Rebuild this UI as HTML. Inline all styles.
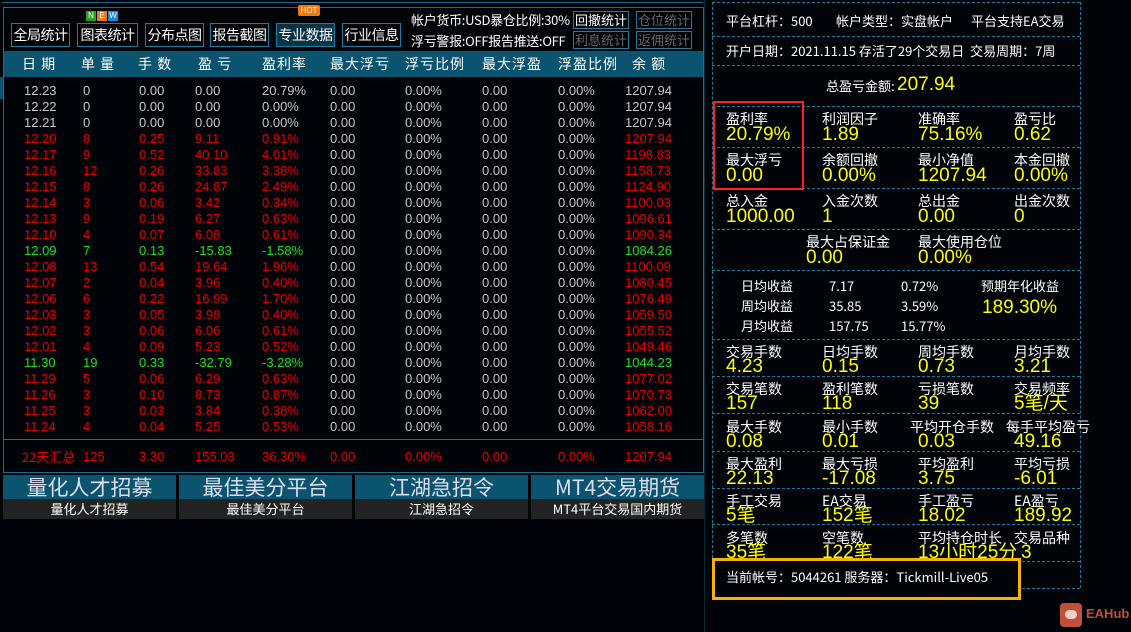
<!DOCTYPE html>
<html><head><meta charset="utf-8">
<style>
*{margin:0;padding:0;box-sizing:border-box}
body{width:1131px;height:632px;background:#000308;position:relative;overflow:hidden;font-family:"Liberation Sans","Noto Sans CJK SC",sans-serif;color:#fff}
.a{position:absolute;white-space:nowrap}
.btn{position:absolute;top:23px;height:24px;border:1px solid #1a7fa0;background:#000;color:#fff;font-size:14px;line-height:22px;text-align:center;font-family:"Noto Sans CJK SC",sans-serif;white-space:nowrap;overflow:hidden;letter-spacing:-0.5px}
.sb{position:absolute;height:18px;width:56px;border:1px solid #2a7a95;font-size:13px;line-height:16px;text-align:center;font-family:"Noto Sans CJK SC",sans-serif;white-space:nowrap;overflow:hidden;background:#000308}
.hd span{position:absolute;top:56px;font-size:14px;color:#fff;font-family:"Noto Sans CJK SC",sans-serif;letter-spacing:1px;line-height:16px}
.r{position:absolute;left:0;height:16px;font-size:13px;line-height:16px;width:700px}
.r span{position:absolute}
.r span:nth-child(1){left:24px}.r span:nth-child(2){left:83px}.r span:nth-child(3){left:139px}.r span:nth-child(4){left:195px}.r span:nth-child(5){left:262px}
.r span:nth-child(6){left:330px;color:#c8c8c8}.r span:nth-child(7){left:405px;color:#c8c8c8}.r span:nth-child(8){left:482px;color:#c8c8c8}.r span:nth-child(9){left:558px;color:#c8c8c8}.r span:nth-child(10){left:625px}
.g{color:#c8c8c8}.red{color:#e80000}.gr{color:#22e022}
.bb{position:absolute;top:475px;height:44px;width:173px}
.bb .t{height:24px;background:#0b5470;color:#dde;font-size:21px;line-height:24px;text-align:center;font-family:"Noto Sans CJK SC",sans-serif}
.bb .s{height:20px;background:#232323;color:#fff;font-size:13px;line-height:20px;text-align:center;font-family:"Noto Sans CJK SC",sans-serif}
.dl{position:absolute;left:712px;width:368px;border-top:1px dashed #1d7b9c;height:0}
.L{position:absolute;font-size:14px;color:#fff;font-family:"Noto Sans CJK SC",sans-serif;line-height:16px;white-space:nowrap}
.V{position:absolute;font-size:19px;color:#ffff00;line-height:20px;white-space:nowrap}
.w{position:absolute;font-size:13px;color:#fff;font-family:"Noto Sans CJK SC",sans-serif;white-space:nowrap;line-height:16px}
</style></head><body>
<div class="a" style="left:2px;top:0;width:701px;height:3px;border-bottom:1px solid #1a6f8f"></div>
<div class="a" style="left:3px;top:7px;width:701px;height:466px;border:1px solid #1a6f8f"></div>
<div class="a" style="left:0;top:77px;width:3px;height:22px;background:#0b5470"></div>
<div class="a" style="left:4px;top:51px;width:699px;height:26px;background:#0b5470"></div>

<div class="btn" style="left:11px;width:59px">全局统计</div>
<div class="btn" style="left:77px;width:61px">图表统计</div>
<div class="btn" style="left:145px;width:59px">分布点图</div>
<div class="btn" style="left:210px;width:59px">报告截图</div>
<div class="btn" style="left:276px;width:59px;background:#0a3346">专业数据</div>
<div class="btn" style="left:342px;width:59px">行业信息</div>
<div class="a" style="left:86px;top:11px;width:10px;height:10px;background:#2aa02a;font-size:8px;line-height:10px;text-align:center;color:#fff">N</div>
<div class="a" style="left:97px;top:11px;width:10px;height:10px;background:#f07a10;font-size:8px;line-height:10px;text-align:center;color:#fff">E</div>
<div class="a" style="left:108px;top:11px;width:10px;height:10px;background:#1a8ae0;font-size:8px;line-height:10px;text-align:center;color:#fff">W</div>
<div class="a" style="left:298px;top:5px;width:22px;height:11px;background:#f07a10;font-size:8px;line-height:11px;text-align:center;color:#fff;border-radius:2px">HOT</div>
<div class="w" style="left:411px;top:12px;font-size:13px;letter-spacing:-0.3px">帐户货币:USD暴仓比例:30%</div>
<div class="w" style="left:411px;top:33px;font-size:13px;letter-spacing:-0.3px">浮亏警报:OFF报告推送:OFF</div>
<div class="sb" style="left:573px;top:11px;color:#fff">回撤统计</div>
<div class="sb" style="left:636px;top:11px;color:#666">仓位统计</div>
<div class="sb" style="left:573px;top:31px;color:#666">利息统计</div>
<div class="sb" style="left:636px;top:31px;color:#666">返佣统计</div>

<div class="hd"><span style="left:22px">日 期</span><span style="left:81px">单 量</span><span style="left:138px">手 数</span><span style="left:198px">盈 亏</span><span style="left:262px">盈利率</span><span style="left:330px">最大浮亏</span><span style="left:405px">浮亏比例</span><span style="left:482px">最大浮盈</span><span style="left:558px">浮盈比例</span><span style="left:632px">余 额</span></div>

<div class="r g" style="top:83px"><span>12.23</span><span>0</span><span>0.00</span><span>0.00</span><span>20.79%</span><span>0.00</span><span>0.00%</span><span>0.00</span><span>0.00%</span><span>1207.94</span></div>
<div class="r g" style="top:99px"><span>12.22</span><span>0</span><span>0.00</span><span>0.00</span><span>0.00%</span><span>0.00</span><span>0.00%</span><span>0.00</span><span>0.00%</span><span>1207.94</span></div>
<div class="r g" style="top:115px"><span>12.21</span><span>0</span><span>0.00</span><span>0.00</span><span>0.00%</span><span>0.00</span><span>0.00%</span><span>0.00</span><span>0.00%</span><span>1207.94</span></div>
<div class="r red" style="top:131px"><span>12.20</span><span>8</span><span>0.25</span><span>9.11</span><span>0.91%</span><span>0.00</span><span>0.00%</span><span>0.00</span><span>0.00%</span><span>1207.94</span></div>
<div class="r red" style="top:147px"><span>12.17</span><span>9</span><span>0.52</span><span>40.10</span><span>4.01%</span><span>0.00</span><span>0.00%</span><span>0.00</span><span>0.00%</span><span>1198.83</span></div>
<div class="r red" style="top:163px"><span>12.16</span><span>12</span><span>0.26</span><span>33.83</span><span>3.38%</span><span>0.00</span><span>0.00%</span><span>0.00</span><span>0.00%</span><span>1158.73</span></div>
<div class="r red" style="top:179px"><span>12.15</span><span>8</span><span>0.26</span><span>24.87</span><span>2.49%</span><span>0.00</span><span>0.00%</span><span>0.00</span><span>0.00%</span><span>1124.90</span></div>
<div class="r red" style="top:195px"><span>12.14</span><span>3</span><span>0.06</span><span>3.42</span><span>0.34%</span><span>0.00</span><span>0.00%</span><span>0.00</span><span>0.00%</span><span>1100.03</span></div>
<div class="r red" style="top:211px"><span>12.13</span><span>9</span><span>0.19</span><span>6.27</span><span>0.63%</span><span>0.00</span><span>0.00%</span><span>0.00</span><span>0.00%</span><span>1096.61</span></div>
<div class="r red" style="top:227px"><span>12.10</span><span>4</span><span>0.07</span><span>6.08</span><span>0.61%</span><span>0.00</span><span>0.00%</span><span>0.00</span><span>0.00%</span><span>1090.34</span></div>
<div class="r gr" style="top:243px"><span>12.09</span><span>7</span><span>0.13</span><span>-15.83</span><span>-1.58%</span><span>0.00</span><span>0.00%</span><span>0.00</span><span>0.00%</span><span>1084.26</span></div>
<div class="r red" style="top:259px"><span>12.08</span><span>13</span><span>0.54</span><span>19.64</span><span>1.96%</span><span>0.00</span><span>0.00%</span><span>0.00</span><span>0.00%</span><span>1100.09</span></div>
<div class="r red" style="top:275px"><span>12.07</span><span>2</span><span>0.04</span><span>3.96</span><span>0.40%</span><span>0.00</span><span>0.00%</span><span>0.00</span><span>0.00%</span><span>1080.45</span></div>
<div class="r red" style="top:291px"><span>12.06</span><span>6</span><span>0.22</span><span>16.99</span><span>1.70%</span><span>0.00</span><span>0.00%</span><span>0.00</span><span>0.00%</span><span>1076.49</span></div>
<div class="r red" style="top:307px"><span>12.03</span><span>3</span><span>0.05</span><span>3.98</span><span>0.40%</span><span>0.00</span><span>0.00%</span><span>0.00</span><span>0.00%</span><span>1059.50</span></div>
<div class="r red" style="top:323px"><span>12.02</span><span>3</span><span>0.06</span><span>6.06</span><span>0.61%</span><span>0.00</span><span>0.00%</span><span>0.00</span><span>0.00%</span><span>1055.52</span></div>
<div class="r red" style="top:339px"><span>12.01</span><span>4</span><span>0.09</span><span>5.23</span><span>0.52%</span><span>0.00</span><span>0.00%</span><span>0.00</span><span>0.00%</span><span>1049.46</span></div>
<div class="r gr" style="top:355px"><span>11.30</span><span>19</span><span>0.33</span><span>-32.79</span><span>-3.28%</span><span>0.00</span><span>0.00%</span><span>0.00</span><span>0.00%</span><span>1044.23</span></div>
<div class="r red" style="top:371px"><span>11.29</span><span>5</span><span>0.06</span><span>6.29</span><span>0.63%</span><span>0.00</span><span>0.00%</span><span>0.00</span><span>0.00%</span><span>1077.02</span></div>
<div class="r red" style="top:387px"><span>11.26</span><span>3</span><span>0.10</span><span>8.73</span><span>0.87%</span><span>0.00</span><span>0.00%</span><span>0.00</span><span>0.00%</span><span>1070.73</span></div>
<div class="r red" style="top:403px"><span>11.25</span><span>3</span><span>0.03</span><span>3.84</span><span>0.38%</span><span>0.00</span><span>0.00%</span><span>0.00</span><span>0.00%</span><span>1062.00</span></div>
<div class="r red" style="top:419px"><span>11.24</span><span>4</span><span>0.04</span><span>5.25</span><span>0.53%</span><span>0.00</span><span>0.00%</span><span>0.00</span><span>0.00%</span><span>1058.16</span></div>
<div class="a" style="left:4px;top:439px;width:699px;border-top:1px solid #1a6f8f"></div>
<div class="r red" style="top:449px"><span style="left:22px;font-family:'Noto Sans CJK SC',sans-serif">22天汇总</span><span>125</span><span>3.30</span><span>155.03</span><span>36.30%</span><span style="color:#e80000">0.00</span><span style="color:#e80000">0.00%</span><span style="color:#e80000">0.00</span><span style="color:#e80000">0.00%</span><span>1207.94</span></div>

<div class="bb" style="left:3px"><div class="t">量化人才招募</div><div class="s">量化人才招募</div></div>
<div class="bb" style="left:179px"><div class="t">最佳美分平台</div><div class="s">最佳美分平台</div></div>
<div class="bb" style="left:355px"><div class="t">江湖急招令</div><div class="s">江湖急招令</div></div>
<div class="bb" style="left:531px"><div class="t">MT4交易期货</div><div class="s">MT4平台交易国内期货</div></div>

<div class="a" style="left:704px;top:0;width:1px;height:632px;background:#0a2a38"></div>
<div class="a" style="left:712px;top:2px;height:586px;border-left:1px dashed #1d7b9c"></div>
<div class="a" style="left:1080px;top:2px;height:586px;border-left:1px dashed #1d7b9c"></div>
<div class="dl" style="top:2px"></div><div class="dl" style="top:36px"></div><div class="dl" style="top:65px"></div><div class="dl" style="top:106px"></div><div class="dl" style="top:147px"></div><div class="dl" style="top:188px"></div><div class="dl" style="top:229px"></div><div class="dl" style="top:270px"></div><div class="dl" style="top:339px"></div><div class="dl" style="top:376px"></div><div class="dl" style="top:413px"></div><div class="dl" style="top:451px"></div><div class="dl" style="top:488px"></div><div class="dl" style="top:524px"></div><div class="dl" style="top:561px"></div><div class="dl" style="top:588px"></div>

<div class="w" style="left:726px;top:13px">平台杠杆：500</div>
<div class="w" style="left:836px;top:13px">帐户类型：实盘帐户</div>
<div class="w" style="left:971px;top:13px">平台支持EA交易</div>
<div class="w" style="left:726px;top:43px">开户日期：2021.11.15 存活了29个交易日&nbsp; 交易周期：7周</div>
<div class="w" style="left:826px;top:78px">总盈亏金额:</div><div class="V" style="left:897px;top:75px">207.94</div>

<div class="L" style="left:726px;top:111px">盈利率</div><div class="V" style="left:726px;top:125px">20.79%</div>
<div class="L" style="left:822px;top:111px">利润因子</div><div class="V" style="left:822px;top:125px">1.89</div>
<div class="L" style="left:918px;top:111px">准确率</div><div class="V" style="left:918px;top:125px">75.16%</div>
<div class="L" style="left:1014px;top:111px">盈亏比</div><div class="V" style="left:1014px;top:125px">0.62</div>

<div class="L" style="left:726px;top:152px">最大浮亏</div><div class="V" style="left:726px;top:166px">0.00</div>
<div class="L" style="left:822px;top:152px">余额回撤</div><div class="V" style="left:822px;top:166px">0.00%</div>
<div class="L" style="left:918px;top:152px">最小净值</div><div class="V" style="left:918px;top:166px">1207.94</div>
<div class="L" style="left:1014px;top:152px">本金回撤</div><div class="V" style="left:1014px;top:166px">0.00%</div>

<div class="L" style="left:726px;top:193px">总入金</div><div class="V" style="left:726px;top:207px">1000.00</div>
<div class="L" style="left:822px;top:193px">入金次数</div><div class="V" style="left:822px;top:207px">1</div>
<div class="L" style="left:918px;top:193px">总出金</div><div class="V" style="left:918px;top:207px">0.00</div>
<div class="L" style="left:1014px;top:193px">出金次数</div><div class="V" style="left:1014px;top:207px">0</div>

<div class="L" style="left:806px;top:234px">最大占保证金</div><div class="V" style="left:806px;top:248px">0.00</div>
<div class="L" style="left:918px;top:234px">最大使用仓位</div><div class="V" style="left:918px;top:248px">0.00%</div>

<div class="w" style="left:741px;top:278px">日均收益</div><div class="w" style="left:829px;top:278px">7.17</div><div class="w" style="left:901px;top:278px">0.72%</div>
<div class="w" style="left:741px;top:298px">周均收益</div><div class="w" style="left:829px;top:298px">35.85</div><div class="w" style="left:901px;top:298px">3.59%</div>
<div class="w" style="left:741px;top:318px">月均收益</div><div class="w" style="left:829px;top:318px">157.75</div><div class="w" style="left:901px;top:318px">15.77%</div>
<div class="w" style="left:981px;top:278px">预期年化收益</div><div class="V" style="left:982px;top:298px">189.30%</div>

<div class="L" style="left:726px;top:344px">交易手数</div><div class="V" style="left:726px;top:357px">4.23</div>
<div class="L" style="left:822px;top:344px">日均手数</div><div class="V" style="left:822px;top:357px">0.15</div>
<div class="L" style="left:918px;top:344px">周均手数</div><div class="V" style="left:918px;top:357px">0.73</div>
<div class="L" style="left:1014px;top:344px">月均手数</div><div class="V" style="left:1014px;top:357px">3.21</div>

<div class="L" style="left:726px;top:381px">交易笔数</div><div class="V" style="left:726px;top:394px">157</div>
<div class="L" style="left:822px;top:381px">盈利笔数</div><div class="V" style="left:822px;top:394px">118</div>
<div class="L" style="left:918px;top:381px">亏损笔数</div><div class="V" style="left:918px;top:394px">39</div>
<div class="L" style="left:1014px;top:381px">交易频率</div><div class="V" style="left:1014px;top:394px">5笔/天</div>

<div class="L" style="left:726px;top:419px">最大手数</div><div class="V" style="left:726px;top:432px">0.08</div>
<div class="L" style="left:822px;top:419px">最小手数</div><div class="V" style="left:822px;top:432px">0.01</div>
<div class="L" style="left:910px;top:419px">平均开仓手数</div><div class="V" style="left:918px;top:432px">0.03</div>
<div class="L" style="left:1006px;top:419px">每手平均盈亏</div><div class="V" style="left:1014px;top:432px">49.16</div>

<div class="L" style="left:726px;top:456px">最大盈利</div><div class="V" style="left:726px;top:469px">22.13</div>
<div class="L" style="left:822px;top:456px">最大亏损</div><div class="V" style="left:822px;top:469px">-17.08</div>
<div class="L" style="left:918px;top:456px">平均盈利</div><div class="V" style="left:918px;top:469px">3.75</div>
<div class="L" style="left:1014px;top:456px">平均亏损</div><div class="V" style="left:1014px;top:469px">-6.01</div>

<div class="L" style="left:726px;top:493px">手工交易</div><div class="V" style="left:726px;top:506px">5笔</div>
<div class="L" style="left:822px;top:493px">EA交易</div><div class="V" style="left:822px;top:506px">152笔</div>
<div class="L" style="left:918px;top:493px">手工盈亏</div><div class="V" style="left:918px;top:506px">18.02</div>
<div class="L" style="left:1014px;top:493px">EA盈亏</div><div class="V" style="left:1014px;top:506px">189.92</div>

<div class="L" style="left:726px;top:530px">多笔数</div><div class="V" style="left:726px;top:543px">35笔</div>
<div class="L" style="left:822px;top:530px">空笔数</div><div class="V" style="left:822px;top:543px">122笔</div>
<div class="L" style="left:918px;top:530px">平均持仓时长</div><div class="V" style="left:918px;top:543px">13小时25分</div>
<div class="L" style="left:1014px;top:530px">交易品种</div><div class="V" style="left:1021px;top:543px">3</div>

<div class="a" style="left:713px;top:101px;width:91px;height:89px;border:2px solid #ff2020"></div>
<div class="a" style="left:712px;top:558px;width:309px;height:42px;border:3px solid #f5b400;background:#000308"></div>
<div class="w" style="left:726px;top:569px">当前帐号：5044261 服务器：Tickmill-Live05</div>

<div class="a" style="left:1060px;top:603px;width:22px;height:24px;background:#c0503a;border-radius:4px"></div>
<div class="a" style="left:1065px;top:610px;width:12px;height:9px;background:#f0d0c8;border-radius:5px"></div>
<div class="a" style="left:1086px;top:606px;font-size:13px;font-weight:bold;color:#c0503a">EAHub</div>
</body></html>
